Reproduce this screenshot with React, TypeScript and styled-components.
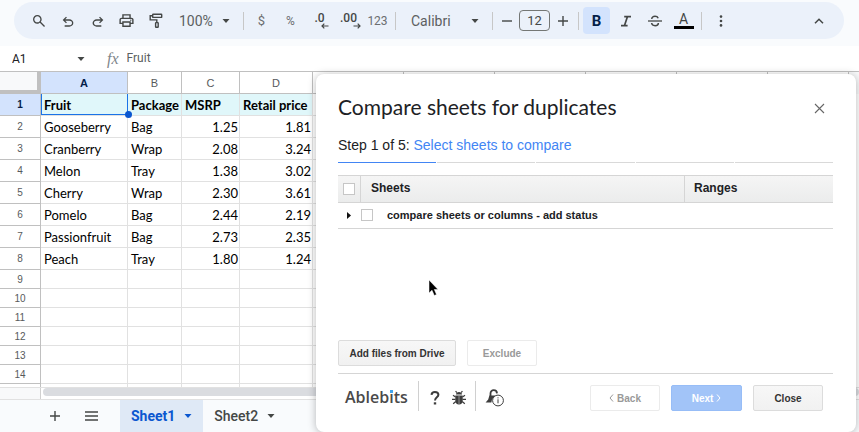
import React from "react";
import styled, { createGlobalStyle, css } from "styled-components";

const GlobalStyle = createGlobalStyle`
  * { box-sizing: border-box; }
  body { margin: 0; background: #fff; font-family: Roboto, "Liberation Sans", sans-serif; }
  button, input, select { font: inherit; color: inherit; margin: 0; }
`;

const Page = styled.div`
  position: relative;
  display: flex;
  flex-direction: column;
  height: 100vh;
  overflow: hidden;
  color: #444746;
`;

/* ---------- toolbar ---------- */

const ToolbarArea = styled.header`
  flex: none;
  padding: 2px 15px 7px 14px;
  background: #f9fbfd;
`;

const Toolbar = styled.div`
  display: flex;
  align-items: center;
  height: 37px;
  padding: 0 11px 0 10px;
  border-radius: 19px;
  background: #ebf1fa;
`;

const ToolButton = styled.button<{ $width?: number; $active?: boolean; $dim?: boolean }>`
  display: flex;
  flex: none;
  align-items: center;
  justify-content: center;
  width: ${(p) => p.$width ?? 29}px;
  height: 27px;
  padding: 0;
  border: 0;
  border-radius: 4px;
  background: none;
  color: ${(p) => (p.$dim ? "#6b6e70" : "#444746")};
  font-size: 13px;
  ${(p) =>
    p.$active &&
    css`
      width: 27px;
      margin: 0 1px;
      background: #d3e3fd;
      color: #041e49;
      font-weight: 700;
      font-size: 15px;
    `}
`;

const SmallLabel = styled.span`
  font-size: 12px;
`;

const Separator = styled.span`
  flex: none;
  width: 1px;
  height: 18px;
  margin: 0 3px;
  background: #c7c7c7;
`;

const Spacer = styled.span`
  flex: 1;
`;

const SelectBox = styled.label<{ $width: number; $indent: number }>`
  display: grid;
  flex: none;
  grid-template-columns: 1fr 8px;
  align-items: center;
  width: ${(p) => p.$width}px;
  padding-right: 10px;
  svg {
    grid-area: 1 / 2;
    pointer-events: none;
  }
  select {
    grid-area: 1 / 1 / 2 / 3;
    width: 100%;
    padding: 0 0 0 ${(p) => p.$indent}px;
    border: 0;
    outline: 0;
    background: none;
    appearance: none;
    color: #5c5f61;
    font-size: 14px;
    line-height: 20px;
  }
`;

const SizeInput = styled.input`
  flex: none;
  width: 31px;
  height: 21px;
  margin: 0 1px;
  padding: 0;
  border: 1px solid #747775;
  border-radius: 4px;
  background: none;
  font-size: 13px;
  text-align: center;
`;

const Decimal = styled.span`
  display: flex;
  flex-direction: column;
  padding-top: 1px;
  font-size: 12px;
  font-weight: 500;
  line-height: 10px;
  svg {
    align-self: flex-end;
    margin-right: -4px;
  }
`;

const ColorLetter = styled.span`
  width: 20px;
  border-bottom: 3px solid #000;
  font-size: 14px;
  line-height: 14px;
`;

/* ---------- formula bar ---------- */

const FormulaBar = styled.div`
  display: flex;
  flex: none;
  align-items: center;
  height: 26px;
  padding: 0 12px;
  border-bottom: 1px solid #c0c0c0;
  font-size: 12px;
`;

const NameBox = styled.input`
  width: 65px;
  padding: 0;
  border: 0;
  background: none;
  color: #202124;
`;

const Fx = styled.span`
  margin: 0 8px 0 22px;
  color: #80868b;
  font: italic 16px "Liberation Serif", serif;
`;

const FormulaInput = styled.input`
  flex: 1;
  min-width: 0;
  height: 20px;
  padding: 0 0 2px;
  border: 0;
  background: none;
  color: #5c5f61;
`;

/* ---------- grid ---------- */

const GridArea = styled.main`
  display: flex;
  flex: 1;
  min-height: 0;
  overflow: hidden;
`;

const GridTable = styled.table`
  flex: 1;
  min-width: 0;
  width: 100%;
  align-self: flex-start;
  table-layout: fixed;
  border-collapse: separate;
  border-spacing: 0;
`;

const ColHead = styled.th<{ $selected?: boolean }>`
  height: 22px;
  padding: 0;
  border: solid #c0c0c0;
  border-width: 0 1px 1px 0;
  background: ${(p) => (p.$selected ? "#d3e3fd" : "#fff")};
  color: ${(p) => (p.$selected ? "#041e49" : "#575a5c")};
  font: ${(p) => (p.$selected ? 700 : 400)} 11px "Liberation Sans", sans-serif;
`;

const Corner = styled.td`
  height: 22px;
  padding: 0;
  border: solid #c0c0c0;
  border-width: 0 4px 4px 0;
  background: #f8f9fa;
`;

const RowHead = styled.th<{ $selected?: boolean; $tall?: boolean }>`
  height: ${(p) => (p.$tall ? 22 : 19)}px;
  padding: 0;
  border: solid #c0c0c0;
  border-width: 0 1px 1px 0;
  background: ${(p) => (p.$selected ? "#d3e3fd" : "#fff")};
  color: ${(p) => (p.$selected ? "#041e49" : "#575a5c")};
  font: ${(p) => (p.$selected ? 700 : 400)} 10px "Liberation Sans", sans-serif;
`;

const Cell = styled.td<{ $header?: boolean; $number?: boolean }>`
  position: relative;
  padding: 1px 1px 0 3px;
  border: solid #e1e1e1;
  border-width: 0 1px 1px 0;
  background: ${(p) => (p.$header ? "#e0f7fa" : "#fff")};
  color: #000;
  font-family: Lato, "Open Sans", sans-serif;
  font-size: 13px;
  font-weight: ${(p) => (p.$header ? 700 : 400)};
  line-height: 16px;
  text-align: ${(p) => (p.$number ? "right" : "left")};
  white-space: nowrap;
`;

const Selection = styled.span`
  position: absolute;
  inset: 0 -1px 0 0;
  border: solid #1a73e8;
  border-width: 0 1px 1px 1px;
  &::after {
    content: "";
    position: absolute;
    right: -5px;
    bottom: -4px;
    z-index: 1;
    width: 7px;
    height: 7px;
    border-radius: 50%;
    background: #0b57d0;
  }
`;

const VerticalTrack = styled.div`
  flex: none;
  width: 10px;
  border-top: 22px solid #f8f9fa;
  background: #fff;
`;

const ScrollRow = styled.div`
  display: flex;
  flex: none;
  height: 13px;
  border: solid #e1e1e1;
  border-width: 1px 0;
  background: #fff;
`;

const ScrollCorner = styled.div`
  width: 41px;
  margin-right: 2px;
  border-right: 1px solid #d0d0d0;
  background: #f8f9fa;
`;

const ScrollThumb = styled.div`
  flex: 1;
  height: 8px;
  border-radius: 4px;
  background: #dadce0;
`;

/* ---------- sheet tabs ---------- */

const TabBar = styled.nav`
  display: flex;
  flex: none;
  align-items: center;
  height: 32px;
  padding-left: 36px;
  background: #f9fbfd;
`;

const TabTool = styled.button`
  display: flex;
  align-items: center;
  justify-content: center;
  width: 37px;
  height: 32px;
  padding: 0;
  border: 0;
  background: none;
  color: #444746;
`;

const Tab = styled.button<{ $active?: boolean }>`
  display: flex;
  align-items: center;
  gap: 9px;
  height: 32px;
  padding: 0 11px;
  border: 0;
  background: ${(p) => (p.$active ? "#dfe9f6" : "none")};
  color: ${(p) => (p.$active ? "#0b57d0" : "#444746")};
  font-size: 14px;
  font-weight: ${(p) => (p.$active ? 700 : 500)};
`;

const TabDivider = styled.span`
  width: 10px;
`;

/* ---------- dialog ---------- */

const Dialog = styled.section`
  position: absolute;
  inset: 74px 3px 0 316px;
  display: flex;
  flex-direction: column;
  padding: 20px 23px 21px 22px;
  border-radius: 8px;
  background: #fff;
  box-shadow: 0 1px 8px rgba(0, 0, 0, 0.28);
  color: #202124;
  font-family: "Liberation Sans", sans-serif;
`;

const DialogHead = styled.div`
  display: flex;
  align-items: center;
  justify-content: space-between;
  height: 28px;
  padding-right: 8px;
`;

const Title = styled.h1`
  margin: 0;
  padding-bottom: 2px;
  font: 400 21px/26px Lato, sans-serif;
`;

const IconButton = styled.button`
  display: flex;
  align-items: center;
  padding: 0;
  border: 0;
  background: none;
  color: #444;
`;

const Step = styled.p`
  margin: 14px 0 7px;
  font-size: 14px;
  line-height: 18px;
  a {
    color: #4285f4;
    text-decoration: none;
  }
`;

const Progress = styled.div`
  display: grid;
  grid-template-columns: repeat(5, 1fr);
  gap: 1px;
`;

const Segment = styled.span<{ $done?: boolean }>`
  height: 1px;
  margin-top: 1px;
  background: ${(p) => (p.$done ? "#4285f4" : "#d9d9d9")};
`;

const SheetsTable = styled.table`
  width: 100%;
  margin-top: 12px;
  table-layout: fixed;
  border-collapse: separate;
  border-spacing: 0;
  border-top: 1px solid #d5d5d5;
  th,
  td {
    height: 27px;
    padding: 0 0 2px 10px;
    border-bottom: 1px solid #d5d5d5;
    font-size: 12px;
    text-align: left;
  }
  th {
    background: linear-gradient(#f5f5f5, #ebecec);
  }
  th + th {
    border-left: 1px solid #d5d5d5;
  }
  th:last-child {
    padding-left: 9px;
  }
  th:first-child {
    padding: 0 0 0 5px;
  }
  td {
    height: 26px;
    padding: 0 0 1px 9px;
  }
`;

const Tick = styled.input`
  display: block;
  width: 12px;
  height: 12px;
  margin: 0;
  border: 1px solid #c6c6c6;
  background: #fff;
  appearance: none;
`;

const SheetEntry = styled.div`
  display: flex;
  align-items: center;
  label {
    margin-left: 14px;
    font-size: 11px;
    font-weight: 700;
  }
  input {
    margin-left: 10px;
  }
`;

const ButtonRow = styled.div`
  display: flex;
  gap: 11px;
  margin-top: auto;
  padding-bottom: 7px;
  border-bottom: 1px solid #d5d5d5;
`;

const ActionButton = styled.button<{ $primary?: boolean; $wide?: boolean }>`
  display: flex;
  align-items: center;
  justify-content: center;
  gap: 3px;
  min-width: ${(p) => (p.$wide ? 118 : 70)}px;
  height: 26px;
  padding: 0 10px;
  border: 1px solid #dcdcdc;
  border-radius: 2px;
  background: linear-gradient(#f7f7f7, #f1f1f1);
  color: #333;
  font-size: 10px;
  font-weight: 700;
  &:disabled {
    border-color: #ebebeb;
    background: #fff;
    color: #999;
  }
  ${(p) =>
    p.$primary &&
    css`
      min-width: 71px;
      border-color: #97bdf7;
      background: #a2c4f8;
      color: #fff;
    `}
`;

const Footer = styled.footer`
  display: flex;
  align-items: center;
  height: 30px;
  margin-top: 7px;
  padding: 0 10px 0 7px;
`;

const Brand = styled.span`
  padding: 2px 1px 0 0;
  color: #4a4a4a;
  font: 600 16px "Open Sans", sans-serif;
`;

const BlueDotLetter = styled.span`
  position: relative;
  &::after {
    content: "";
    position: absolute;
    top: 4px;
    left: 1px;
    width: 3px;
    height: 3px;
    background: #41a5ee;
  }
`;

const FooterRule = styled.span`
  width: 1px;
  height: 30px;
  margin: 0 9px;
  background: #d0d0d0;
`;

const FooterIcons = styled.div<{ $indent?: number }>`
  display: flex;
  gap: 12px;
  padding: 3px 0 0 ${(p) => p.$indent ?? 0}px;
`;

const FooterActions = styled.div`
  display: flex;
  align-self: flex-end;
  gap: 11px;
  margin-left: auto;
`;

const Pointer = styled.svg`
  position: absolute;
  top: 279px;
  left: 428px;
`;

/* ---------- icons ---------- */

const Symbol = ({ d, size = 16 }: { d: string; size?: number }) => (
  <svg width={size} height={size} viewBox="0 -960 960 960" fill="currentColor" aria-hidden="true">
    <path d={d} />
  </svg>
);

const SEARCH =
  "M784-120 532-372q-30 24-69 38t-83 14q-109 0-184.5-75.5T120-580q0-109 75.5-184.5T380-840q109 0 184.5 75.5T640-580q0 44-14 83t-38 69l252 252-56 56ZM380-400q75 0 127.5-52.5T560-580q0-75-52.5-127.5T380-760q-75 0-127.5 52.5T200-580q0 75 52.5 127.5T380-400Z";
const UNDO =
  "M280-140v-80h284q63 0 109.5-40T720-360q0-60-46.5-100T564-500H312l104 104-56 56-200-200 200-200 56 56-104 104h252q97 0 169.5 63T800-360q0 94-72.5 157T564-140H280Z";
const REDO =
  "M396-140q-97 0-169.5-63T154-360q0-94 72.5-157T396-580h252L544-684l56-56 200 200-200 200-56-56 104-104H396q-63 0-109.5 40T240-360q0 60 46.5 100T396-220h284v80H396Z";
const PRINT =
  "M640-640v-120H320v120h-80v-200h480v200h-80Zm80 180q17 0 28.5-11.5T760-500q0-17-11.5-28.5T720-540q-17 0-28.5 11.5T680-500q0 17 11.5 28.5T720-460Zm-80 260v-160H320v160h320Zm80 80H240v-160H80v-240q0-51 35-85.5t85-34.5h560q51 0 85.5 34.5T880-520v240H720v160Zm80-240v-160q0-17-11.5-28.5T760-560H200q-17 0-28.5 11.5T160-520v160h80v-80h480v80h80Z";

const Caret = () => (
  <svg width="8" height="4" viewBox="0 0 8 4" fill="currentColor" aria-hidden="true">
    <path d="M0.5 0h7L4 4z" />
  </svg>
);

const Paint = () => (
  <svg width="14" height="16" viewBox="0 0 14 16" fill="none" stroke="currentColor" strokeWidth="1.4" aria-hidden="true">
    <rect x="3.7" y="1.2" width="9" height="3.2" rx="0.5" />
    <path d="M3.7 2.8H1.2v4.1h6.6v2.6" />
    <rect x="6.6" y="9.6" width="2.6" height="4.6" rx="0.5" />
  </svg>
);

const Arrow = ({ right }: { right?: boolean }) => (
  <svg width="8" height="6" viewBox="0 0 8 6" fill="none" stroke="currentColor" strokeWidth="1.2" aria-hidden="true">
    <path d={right ? "M0.5 3h6.5M4.7 0.7L7 3 4.7 5.3" : "M7.5 3H1M3.3 0.7L1 3l2.3 2.3"} />
  </svg>
);

const Plus = () => (
  <svg width="10" height="10" viewBox="0 0 10 10" stroke="currentColor" strokeWidth="1.4" aria-hidden="true">
    <path d="M0 5h10M5 0v10" />
  </svg>
);

const Minus = () => (
  <svg width="10" height="10" viewBox="0 0 10 10" stroke="currentColor" strokeWidth="1.4" aria-hidden="true">
    <path d="M0 5h10" />
  </svg>
);

const Italic = () => (
  <svg width="10" height="12" viewBox="0 0 10 12" fill="none" stroke="currentColor" strokeWidth="1.7" aria-hidden="true">
    <path d="M3.2 1.6H10M0 10.6h6.6M6.5 1.6L3.5 10.6" />
  </svg>
);

const Strike = () => (
  <svg width="14" height="12" viewBox="0 0 14 12" fill="none" stroke="currentColor" strokeWidth="1.5" aria-hidden="true">
    <path d="M0 6h14" strokeWidth="1.3" />
    <path d="M3.8 4C3.8 2.3 5.1 1.3 7 1.3c1.7 0 2.7.7 3.2 1.9M3.6 8c.3 1.8 1.6 2.7 3.5 2.7s3.3-.9 3.3-2.6" />
  </svg>
);

const Dots = () => (
  <svg width="4" height="12" viewBox="0 0 4 12" fill="currentColor" aria-hidden="true">
    <circle cx="2" cy="1.6" r="1.3" />
    <circle cx="2" cy="6" r="1.3" />
    <circle cx="2" cy="10.4" r="1.3" />
  </svg>
);

const ChevronUp = () => (
  <svg width="10" height="6" viewBox="0 0 10 6" fill="none" stroke="currentColor" strokeWidth="1.5" aria-hidden="true">
    <path d="M1 5.2l4-4 4 4" />
  </svg>
);

const Chevron = ({ right }: { right?: boolean }) => (
  <svg width="5" height="8" viewBox="0 0 5 8" fill="none" stroke="currentColor" aria-hidden="true">
    <path d={right ? "M1 0.5L4 4 1 7.5" : "M4 0.5L1 4l3 3.5"} />
  </svg>
);

const Menu = () => (
  <svg width="13" height="10" viewBox="0 0 13 10" stroke="currentColor" strokeWidth="1.5" aria-hidden="true">
    <path d="M0 1h13M0 5h13M0 9h13" />
  </svg>
);

const Cross = () => (
  <svg width="11" height="11" viewBox="0 0 11 11" stroke="#666" strokeWidth="1.1" aria-hidden="true">
    <path d="M1 1l9 9M10 1l-9 9" />
  </svg>
);

const Expander = () => (
  <svg width="4" height="7" viewBox="0 0 4 7" fill="#111" aria-hidden="true">
    <path d="M0 0l4 3.5L0 7z" />
  </svg>
);

const Question = () => (
  <svg width="10" height="16" viewBox="0 0 10 16" fill="none" stroke="#3d3d3d" strokeWidth="2" aria-hidden="true">
    <path d="M1.5 4.8C1.7 2.9 3 2 4.9 2c2 0 3.5 1 3.5 2.8C8.4 7.3 5 7.4 5 10.5" />
    <path d="M5 12.3v2.2" strokeWidth="2.4" />
  </svg>
);

const Bug = () => (
  <svg width="14" height="16" viewBox="0 0 14 16" aria-hidden="true">
    <path d="M4 4.6C4 2.9 5.2 2 7 2s3 .9 3 2.6z" fill="#3d3d3d" />
    <path d="M3.3 5.4h7.4v5.2c0 2.5-1.5 3.9-3.7 3.9s-3.7-1.4-3.7-3.9z" fill="#3d3d3d" />
    <path
      d="M4.8 2.6L3.6 1M9.2 2.6L10.4 1M3.5 7L1 5.2M10.5 7L13 5.2M3.5 9.3H0M10.5 9.3H14M3.8 11.5L1.2 13.8M10.2 11.5l2.6 2.3"
      stroke="#3d3d3d"
      strokeWidth="1.2"
    />
    <path d="M7 6v8" stroke="#aaa" strokeWidth="0.8" />
  </svg>
);

const PrivacyKey = () => (
  <svg width="19" height="18" viewBox="0 0 19 18" fill="none" aria-hidden="true">
    <path d="M5.5 7V4.5C5.5 2.3 6.8 1.2 8.7 1.2c2 0 3.2 1.2 3.3 3.2" stroke="#3d3d3d" strokeWidth="1.8" />
    <path d="M4.4 6.5h6L7 10.5l-.6 3H0.6l2.6-3z" fill="#3d3d3d" />
    <circle cx="13" cy="11.5" r="5.4" fill="#fff" stroke="#3d3d3d" />
    <path d="M13 10.3v4M13 8.3v1.1" stroke="#3d3d3d" />
  </svg>
);

const rows = [
  ["Gooseberry", "Bag", "1.25", "1.81"],
  ["Cranberry", "Wrap", "2.08", "3.24"],
  ["Melon", "Tray", "1.38", "3.02"],
  ["Cherry", "Wrap", "2.30", "3.61"],
  ["Pomelo", "Bag", "2.44", "2.19"],
  ["Passionfruit", "Bag", "2.73", "2.35"],
  ["Peach", "Tray", "1.80", "1.24"],
];
const columns = ["A", "B", "C", "D", "E", "F", "G", "H", "I", "J"];
const widths = [41, 87, 54, 58, 73, 91, 91, 91, 91, 91];
const headings = ["Fruit", "Package", "MSRP", "Retail price"];
const emptyRows = ["9", "10", "11", "12", "13", "14", ""];
const trailing = columns.slice(4);

export default function App() {
  return (
    <Page>
      <GlobalStyle />
      <ToolbarArea>
        <Toolbar role="toolbar">
          <ToolButton aria-label="Search the menus"><Symbol d={SEARCH} /></ToolButton>
          <ToolButton $width={30} aria-label="Undo"><Symbol d={UNDO} /></ToolButton>
          <ToolButton aria-label="Redo"><Symbol d={REDO} /></ToolButton>
          <ToolButton aria-label="Print"><Symbol d={PRINT} size={17} /></ToolButton>
          <ToolButton aria-label="Paint format"><Paint /></ToolButton>
          <SelectBox $width={70} $indent={9}>
            <select aria-label="Zoom"><option>100%</option></select>
            <Caret />
          </SelectBox>
          <Separator />
          <ToolButton $dim>$</ToolButton>
          <ToolButton $dim><SmallLabel>%</SmallLabel></ToolButton>
          <ToolButton aria-label="Decrease decimal places"><Decimal>.0<Arrow /></Decimal></ToolButton>
          <ToolButton aria-label="Increase decimal places"><Decimal>.00<Arrow right /></Decimal></ToolButton>
          <ToolButton $dim><SmallLabel>123</SmallLabel></ToolButton>
          <Separator />
          <SelectBox $width={90} $indent={12}>
            <select aria-label="Font"><option>Calibri</option></select>
            <Caret />
          </SelectBox>
          <Separator />
          <ToolButton $width={22} aria-label="Decrease font size"><Minus /></ToolButton>
          <SizeInput aria-label="Font size" defaultValue="12" />
          <ToolButton $width={24} aria-label="Increase font size"><Plus /></ToolButton>
          <Separator />
          <ToolButton $active>B</ToolButton>
          <ToolButton aria-label="Italic"><Italic /></ToolButton>
          <ToolButton aria-label="Strikethrough"><Strike /></ToolButton>
          <ToolButton aria-label="Text color"><ColorLetter>A</ColorLetter></ToolButton>
          <Separator />
          <ToolButton $width={31} aria-label="More"><Dots /></ToolButton>
          <Spacer />
          <ToolButton aria-label="Hide the menus"><ChevronUp /></ToolButton>
        </Toolbar>
      </ToolbarArea>

      <FormulaBar>
        <NameBox aria-label="Name box" defaultValue="A1" />
        <Caret />
        <Fx>fx</Fx>
        <FormulaInput aria-label="Formula" defaultValue="Fruit" />
      </FormulaBar>

      <GridArea>
        <GridTable>
          <colgroup>
            {widths.map((w, i) => <col key={i} width={w} />)}
            <col />
          </colgroup>
          <thead>
            <tr>
              <Corner />
              {columns.map((c) => <ColHead key={c} $selected={c === "A"}>{c}</ColHead>)}
            </tr>
          </thead>
          <tbody>
            <tr>
              <RowHead $selected $tall>1</RowHead>
              {headings.map((h, i) => (
                <Cell key={h} $header>{h}{i === 0 && <Selection />}</Cell>
              ))}
              {trailing.map((c) => <Cell key={c} />)}
            </tr>
            {rows.map((row, i) => (
              <tr key={row[0]}>
                <RowHead $tall>{i + 2}</RowHead>
                {row.map((v, j) => <Cell key={j} $number={j > 1}>{v}</Cell>)}
                {trailing.map((c) => <Cell key={c} />)}
              </tr>
            ))}
            {emptyRows.map((n) => (
              <tr key={n}>
                <RowHead>{n}</RowHead>
                {columns.map((c) => <Cell key={c} />)}
              </tr>
            ))}
          </tbody>
        </GridTable>
        <VerticalTrack />
      </GridArea>
      <ScrollRow>
        <ScrollCorner />
        <ScrollThumb />
      </ScrollRow>

      <TabBar>
        <TabTool aria-label="Add sheet"><Plus /></TabTool>
        <TabTool aria-label="All sheets"><Menu /></TabTool>
        <TabDivider />
        <Tab $active>Sheet1<Caret /></Tab>
        <Tab>Sheet2<Caret /></Tab>
      </TabBar>

      <Dialog role="dialog" aria-labelledby="dialog-title">
        <DialogHead>
          <Title id="dialog-title">Compare sheets for duplicates</Title>
          <IconButton aria-label="Close dialog"><Cross /></IconButton>
        </DialogHead>
        <Step>Step 1 of 5: <a href="#sheets">Select sheets to compare</a></Step>
        <Progress>
          <Segment $done /><Segment /><Segment /><Segment /><Segment />
        </Progress>
        <SheetsTable id="sheets">
          <colgroup>
            <col width="22" />
            <col />
            <col width="149" />
          </colgroup>
          <thead>
            <tr>
              <th><Tick type="checkbox" aria-label="Select all sheets" /></th>
              <th>Sheets</th>
              <th>Ranges</th>
            </tr>
          </thead>
          <tbody>
            <tr>
              <td colSpan={3}>
                <SheetEntry>
                  <IconButton aria-label="Expand"><Expander /></IconButton>
                  <Tick type="checkbox" id="file" />
                  <label htmlFor="file">compare sheets or columns - add status</label>
                </SheetEntry>
              </td>
            </tr>
          </tbody>
        </SheetsTable>
        <ButtonRow>
          <ActionButton $wide>Add files from Drive</ActionButton>
          <ActionButton disabled>Exclude</ActionButton>
        </ButtonRow>
        <Footer>
          <Brand>Ableb<BlueDotLetter>i</BlueDotLetter>ts</Brand>
          <FooterRule />
          <FooterIcons $indent={2}>
            <IconButton aria-label="Help"><Question /></IconButton>
            <IconButton aria-label="Report a bug"><Bug /></IconButton>
          </FooterIcons>
          <FooterRule />
          <FooterIcons>
            <IconButton aria-label="Privacy"><PrivacyKey /></IconButton>
          </FooterIcons>
          <FooterActions>
            <ActionButton disabled><Chevron />Back</ActionButton>
            <ActionButton $primary>Next<Chevron right /></ActionButton>
            <ActionButton>Close</ActionButton>
          </FooterActions>
        </Footer>
      </Dialog>

      <Pointer width="11" height="18" viewBox="0 0 11 18" aria-hidden="true">
        <path d="M1 1v13l3-2.8 2.3 5.3 2.2-1L6.3 10.5H10z" fill="#000" stroke="#fff" strokeWidth="0.5" />
      </Pointer>
    </Page>
  );
}
